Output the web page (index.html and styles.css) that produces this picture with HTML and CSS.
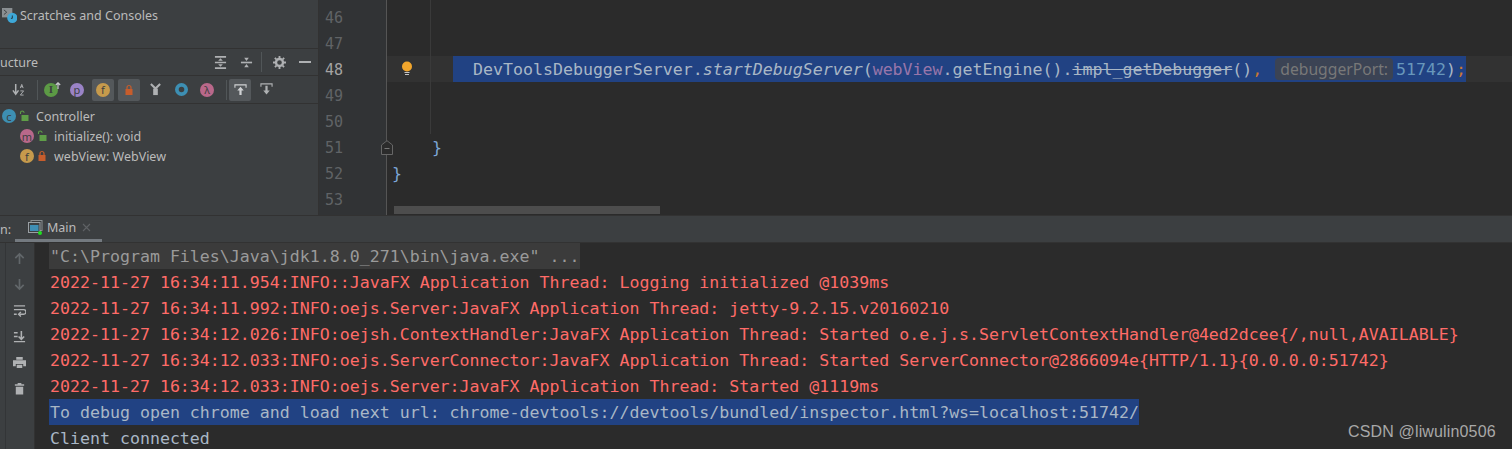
FILE: index.html
```html
<!DOCTYPE html>
<html lang="en">
<head>
<meta charset="utf-8">
<title>IDE</title>
<link rel="stylesheet" href="styles.css">
</head>
<body>
<div class="app">
  <div class="top">
    <aside class="side">
      <div class="scratch">
        <svg class="ico16" viewBox="0 0 16 16"><rect x="0" y="0" width="11" height="10" fill="#8a8f92"/><path d="M2 2l3 2.500L2 7" fill="none" stroke="#3c3f41" stroke-width="1"/><circle cx="11" cy="10.500" r="5.500" fill="#3ea8d8"/><path d="M11 8v3h-1.500" fill="none" stroke="#23323a" stroke-width="1"/></svg>
        <span>Scratches and Consoles</span>
      </div>
      <div class="struct-head">
        <span class="struct-title">ucture</span>
        <div class="head-tools">
          <svg class="t14" viewBox="0 0 14 14"><path d="M1 1h12M1 13h12M1 7h12" stroke="#afb1b3" stroke-width="1.800"/><path d="M7 2.500l2.500 2.500h-5zM7 11.500L4.500 9h5z" fill="#afb1b3"/></svg>
          <svg class="t14" viewBox="0 0 14 14"><path d="M1 7h12" stroke="#afb1b3" stroke-width="1.800"/><path d="M7 5.500L4.500 2h5zM7 8.500l2.500 3.500h-5z" fill="#afb1b3"/></svg>
          <i class="vsep tall"></i>
          <svg class="t14" viewBox="0 0 14 14"><circle cx="7" cy="7" r="3.800" fill="none" stroke="#afb1b3" stroke-width="2.600"/><path d="M7 0v14M0 7h14M2 2l10 10M12 2L2 12" stroke="#afb1b3" stroke-width="2" stroke-dasharray="2.200 9.600 2.200 30"/></svg>
          <i class="dash"></i>
        </div>
      </div>
      <div class="toolbar">
        <span class="tb">
          <svg class="t14" viewBox="0 0 14 14"><path d="M4 1v10M1 8l3 4 3-4" fill="none" stroke="#afb1b3" stroke-width="1.600"/><path d="M9 5.500l1.500-4 1.500 4M9.500 4h2" fill="none" stroke="#afb1b3" stroke-width="1"/><path d="M9 8.500h3.500L9 13h3.500" fill="none" stroke="#afb1b3" stroke-width="1"/></svg>
        </span>
        <i class="vsep"></i>
        <span class="tb inherit"><b class="badge green">I</b><svg class="arrow-up" viewBox="0 0 6 7"><path d="M3 7V1M.8 3L3 .8 5.200 3" fill="none" stroke="#c8cacc" stroke-width="1.200"/></svg></span>
        <span class="tb"><b class="badge purple">p</b></span>
        <span class="tb on"><b class="badge amber">f</b></span>
        <span class="tb on"><svg class="lock" viewBox="0 0 10 12"><path d="M3 5V3.500a2 2 0 0 1 4 0V5" fill="none" stroke="#c75d2c" stroke-width="1.200"/><rect x="1.500" y="5" width="7" height="6" fill="#c75d2c"/></svg></span>
        <span class="tb"><svg class="t14" viewBox="0 0 14 14"><path d="M2 1l5 5 5-5" fill="none" stroke="#afb1b3" stroke-width="2.200"/><rect x="4.500" y="6" width="5" height="7" fill="#afb1b3"/></svg></span>
        <span class="tb"><svg class="t14" viewBox="0 0 14 14"><circle cx="7" cy="7" r="5" fill="none" stroke="#3d8fb3" stroke-width="4"/></svg></span>
        <span class="tb"><b class="badge rose">λ</b></span>
        <i class="vsep"></i>
        <span class="tb on"><svg class="t14" viewBox="0 0 14 14"><path d="M1 5V2h12v3" fill="none" stroke="#cfd1d3" stroke-width="1.200"/><path d="M7 4l3.500 4H8.200v5H5.800V8H3.500z" fill="#cfd1d3"/></svg></span>
        <span class="tb"><svg class="t14" viewBox="0 0 14 14"><path d="M1 4V1h12v3" fill="none" stroke="#afb1b3" stroke-width="1.200"/><path d="M5.800 3h2.400v5h2.300L7 12.500 3.500 8h2.300z" fill="#afb1b3"/></svg></span>
      </div>
      <ul class="tree">
        <li class="node">
          <b class="badge blue">c</b>
          <svg class="lock" viewBox="0 0 10 12"><path d="M1.500 4V2.800a1.800 1.800 0 0 1 3.600 0" fill="none" stroke="#5f9e48" stroke-width="1.100"/><rect x="2.500" y="5" width="7" height="6" fill="#5f9e48"/></svg>
          <span>Controller</span>
        </li>
        <li class="node child">
          <b class="badge rose">m</b>
          <svg class="lock" viewBox="0 0 10 12"><path d="M1.500 4V2.800a1.800 1.800 0 0 1 3.600 0" fill="none" stroke="#5f9e48" stroke-width="1.100"/><rect x="2.500" y="5" width="7" height="6" fill="#5f9e48"/></svg>
          <span>initialize(): void</span>
        </li>
        <li class="node child">
          <b class="badge amber">f</b>
          <svg class="lock" viewBox="0 0 10 12"><path d="M3 5V3.500a2 2 0 0 1 4 0V5" fill="none" stroke="#c75d2c" stroke-width="1.200"/><rect x="1.500" y="5" width="7" height="6" fill="#c75d2c"/></svg>
          <span>webView: WebView</span>
        </li>
      </ul>
    </aside>
    <section class="editor">
      <div class="gutter">
        <div class="num">46</div>
        <div class="num">47</div>
        <div class="num cur">48</div>
        <div class="num">49</div>
        <div class="num">50</div>
        <div class="num">51</div>
        <div class="num">52</div>
        <div class="num">53</div>
      </div>
      <div class="code">
        <div class="guide"></div>
        <div class="ln"></div>
        <div class="ln"></div>
        <div class="ln curline">
          <svg class="bulb" viewBox="0 0 12 16"><circle cx="6" cy="5.500" r="5" fill="#f2a62c"/><path d="M3.500 11.500h5M4 13.500h4" stroke="#c4c4c4" stroke-width="1.100"/></svg>
          <div class="sel"><span class="pl">DevToolsDebuggerServer.</span><em class="it">startDebugServer</em><span class="pl">(</span><span class="field">webView</span><span class="pl">.getEngine().</span><span class="pl strike">impl_getDebugger</span><span class="pl">()</span><span class="kw">,</span><span class="gap"></span><span class="hint">debuggerPort:</span><span class="numv">51742</span><span class="pl">)</span><span class="kw">;</span></div>
        </div>
        <div class="ln"></div>
        <div class="ln"></div>
        <div class="ln in1"><span class="brace">}</span></div>
        <div class="ln in0"><span class="brace">}</span></div>
        <div class="ln"></div>
        <svg class="fold" viewBox="0 0 12 15"><path d="M.5 14.500V5L6 .7 11.500 5v9.500z" fill="#2b2b2b" stroke="#666"/><path d="M3.500 8.500h5" stroke="#777"/></svg>
        <div class="hbar"></div>
      </div>
    </section>
  </div>
  <section class="run">
    <div class="tabs">
      <span class="run-label">n:</span>
      <div class="tab">
        <svg class="ico16" viewBox="0 0 15 15"><rect x="3" y=".5" width="11" height="10" fill="none" stroke="#8a8f92"/><rect x=".5" y="2.500" width="11.500" height="10" fill="#3c3f41" stroke="#9aa0a4"/><rect x="2" y="5" width="8.500" height="6" fill="#3f8fb5"/><circle cx="12" cy="13" r="2" fill="#1fe01f"/></svg>
        <span>Main</span>
        <svg class="close" viewBox="0 0 9 9"><path d="M1 1l7 7M8 1L1 8" stroke="#5f6265" stroke-width="1.100"/></svg>
      </div>
    </div>
    <div class="console">
      <div class="rail">
        <svg class="t14" viewBox="0 0 14 14"><path d="M7 13V2M2.500 6.500L7 2l4.500 4.500" fill="none" stroke="#62676a" stroke-width="1.800"/></svg>
        <svg class="t14" viewBox="0 0 14 14"><path d="M7 1v11M2.500 7.500L7 12l4.500-4.500" fill="none" stroke="#62676a" stroke-width="1.800"/></svg>
        <svg class="t14" viewBox="0 0 14 14"><path d="M1 2h12M1 6h10.500a1.800 1.800 0 0 1 0 5H7M1 11h3" fill="none" stroke="#afb1b3" stroke-width="1.500"/><path d="M8.500 8.500L6 11l2.500 2.500" fill="none" stroke="#afb1b3" stroke-width="1.500"/></svg>
        <svg class="t14" viewBox="0 0 14 14"><path d="M1 3h4M1 7h4M1 12.500h12" stroke="#afb1b3" stroke-width="1.500"/><path d="M9 1v8M6 7l3 3 3-3" fill="none" stroke="#afb1b3" stroke-width="1.700"/></svg>
        <svg class="t14" viewBox="0 0 14 14"><path d="M3.500 1h7v3h-7zM0 4.500h14V11h-3V8.500H3V11H0zM4 9.500h6V13H4z" fill="#afb1b3"/></svg>
        <svg class="t14" viewBox="0 0 14 14"><path d="M2 2.500h10V4H2zM5 1h4v1.500H5zM3 5h8v8.500H3z" fill="#afb1b3"/></svg>
      </div>
      <div class="out">
        <div class="row"><span class="cmd">"C:\Program Files\Java\jdk1.8.0_271\bin\java.exe" ...</span></div>
        <div class="row err">2022-11-27 16:34:11.954:INFO::JavaFX Application Thread: Logging initialized @1039ms</div>
        <div class="row err">2022-11-27 16:34:11.992:INFO:oejs.Server:JavaFX Application Thread: jetty-9.2.15.v20160210</div>
        <div class="row err">2022-11-27 16:34:12.026:INFO:oejsh.ContextHandler:JavaFX Application Thread: Started o.e.j.s.ServletContextHandler@4ed2dcee{/,null,AVAILABLE}</div>
        <div class="row err">2022-11-27 16:34:12.033:INFO:oejs.ServerConnector:JavaFX Application Thread: Started ServerConnector@2866094e{HTTP/1.1}{0.0.0.0:51742}</div>
        <div class="row err">2022-11-27 16:34:12.033:INFO:oejs.Server:JavaFX Application Thread: Started @1119ms</div>
        <div class="row"><span class="picked">To debug open chrome and load next url: chrome-devtools://devtools/bundled/inspector.html?ws=localhost:51742/</span></div>
        <div class="row">Client connected</div>
      </div>
    </div>
  </section>
  <div class="mark">CSDN @liwulin0506</div>
</div>
</body>
</html>
```
FILE: styles.css
```css
* { box-sizing: border-box; }
html, body { margin: 0; padding: 0; }
body { width: 1512px; height: 449px; overflow: hidden; background: #2b2b2b; }

.app {
  position: relative;
  display: flex;
  flex-direction: column;
  width: 1512px;
  height: 449px;
  overflow: hidden;
  font-family: "Noto Sans", "Liberation Sans", sans-serif;
  font-size: 12.5px;
  color: #bbbbbb;
}

.top { display: flex; height: 215px; flex: none; }

/* left tool window */
.side { width: 319px; flex: none; background: #3c3f41; border-right: 1px solid #323232; overflow: hidden; }
.scratch { display: flex; align-items: center; gap: 3px; height: 48px; padding: 0 0 18px 2px; }
.ico16 { width: 15px; height: 15px; flex: none; }
.t14 { width: 13px; height: 13px; flex: none; display: block; }

.struct-head {
  display: flex; align-items: center; justify-content: space-between;
  height: 28px; padding-right: 7px;
  border-top: 1px solid #323232; border-bottom: 1px solid #323232;
}
.struct-title { white-space: nowrap; }
.head-tools { display: flex; align-items: center; gap: 13px; }
.vsep { display: block; width: 1px; height: 16px; background: #515658; flex: none; }
.vsep.tall { height: 20px; margin: 0 -2px 0 -5px; }
.dash { display: block; width: 12px; height: 2px; background: #afb1b3; }

.toolbar { display: flex; align-items: center; height: 28px; padding-left: 7px; border-bottom: 1px solid #323232; }
.toolbar .vsep { margin: 0 2px 0 4px; height: 20px; }
.tb { position: relative; display: flex; align-items: center; justify-content: center; width: 22px; height: 22px; margin-right: 4px; border-radius: 2px; flex: none; }
.tb.on { background: #54585b; }
.arrow-up { position: absolute; right: 1px; top: 3px; width: 6px; height: 7px; }

.badge {
  display: flex; align-items: center; justify-content: center;
  width: 14px; height: 14px; border-radius: 50%; flex: none;
  font-family: "Noto Sans", sans-serif; font-weight: 400; font-size: 11px; line-height: 1; color: #3c3f41;
}
.green { background: #5c9a45; font-family: "Liberation Serif", serif; font-weight: 700; }
.purple { background: #9a83c6; }
.amber { background: #c69a4c; }
.rose { background: #b9688a; }
.blue { background: #3d8fb3; }

.lock { width: 10px; height: 12px; flex: none; }

.tree { list-style: none; margin: 0; padding: 2px 0 0 2px; }
.node { display: flex; align-items: center; height: 20px; gap: 3px; }
.node span { margin-left: 4px; }
.node.child { padding-left: 18px; }

/* editor */
.editor { display: flex; flex: 1; min-width: 0; }
.gutter { width: 68px; flex: none; background: #313335; border-right: 1px solid #555555; padding-top: 4px; }
.num { width: 24px; text-align: right; font: 15px/28px "DejaVu Sans Mono", monospace; color: #606366; height: 26px; }
.num.cur { color: #a4a3a3; }

.code { position: relative; flex: 1; padding-top: 4px; background: #2b2b2b; font: 16.6px/28px "DejaVu Sans Mono", monospace; color: #a9b7c6; }
.ln { height: 26px; white-space: pre; }
.curline { display: flex; background: #323232; padding-left: 14px; }
.bulb { width: 12px; height: 16px; margin-top: 5px; flex: none; }
.sel { margin-left: 40px; width: 1013px; padding-left: 20px; background: #214283; display: flex; }
.it { font-style: italic; }
.field { color: #9876aa; }
.strike { text-decoration: line-through; }
.kw { color: #cc7832; }
.gap { width: 13px; }
.hint {
  display: block; height: 22px; margin: 2px 3px 0 0; padding: 0 5px; border-radius: 4px;
  background: #3b4354; color: #787878;
  font: 15.7px/22px "Noto Sans", sans-serif;
}
.numv { color: #6897bb; }
.in1 { padding-left: 45px; }
.in0 { padding-left: 5px; }
.brace { color: #7ea7d8; }
.guide { position: absolute; left: 43px; top: 0; width: 1px; height: 134px; background: #3a3a3a; }
.fold { position: absolute; left: -6px; top: 140px; width: 12px; height: 15px; }
.hbar { position: absolute; left: 7px; top: 206px; width: 266px; height: 8px; background: #4d4d4d; }

/* run panel */
.run { flex: 1; min-height: 0; border-top: 1px solid #323232; display: flex; flex-direction: column; }
.tabs { display: flex; align-items: stretch; height: 27px; flex: none; background: #3c3f41; border-bottom: 1px solid #323232; }
.run-label { width: 15px; line-height: 27px; flex: none; }
.tab { display: flex; align-items: center; gap: 4px; width: 87px; padding-left: 13px; border-bottom: 3px solid #747a80; }
.close { width: 9px; height: 9px; margin-left: 2px; }

.console { display: flex; flex: 1; min-height: 0; }
.rail {
  width: 35px; flex: none;
  background: linear-gradient(to right, #3c3f41 5px, #333537 5px, #333537 6px, #3c3f41 6px);
  border-right: 1px solid #323232;
  display: flex; flex-direction: column; align-items: center; gap: 13px; padding: 9px 0 0 5px;
}
.out { flex: 1; padding-left: 13px; font: 16.6px/28px "DejaVu Sans Mono", monospace; color: #a9b7c6; }
.row { height: 26px; white-space: pre; padding-left: 2px; }
.err { color: #ff6b68; }
.cmd, .picked { display: block; width: fit-content; height: 26px; margin-left: -1px; padding-left: 1px; }
.cmd { background: #3b3b3b; color: #9a9a9a; }
.picked { background: #214283; }

.mark { position: absolute; left: 1348px; top: 422px; font: 16px/20px "Liberation Sans", sans-serif; color: #a8a8a8; letter-spacing: .15px; }
```
